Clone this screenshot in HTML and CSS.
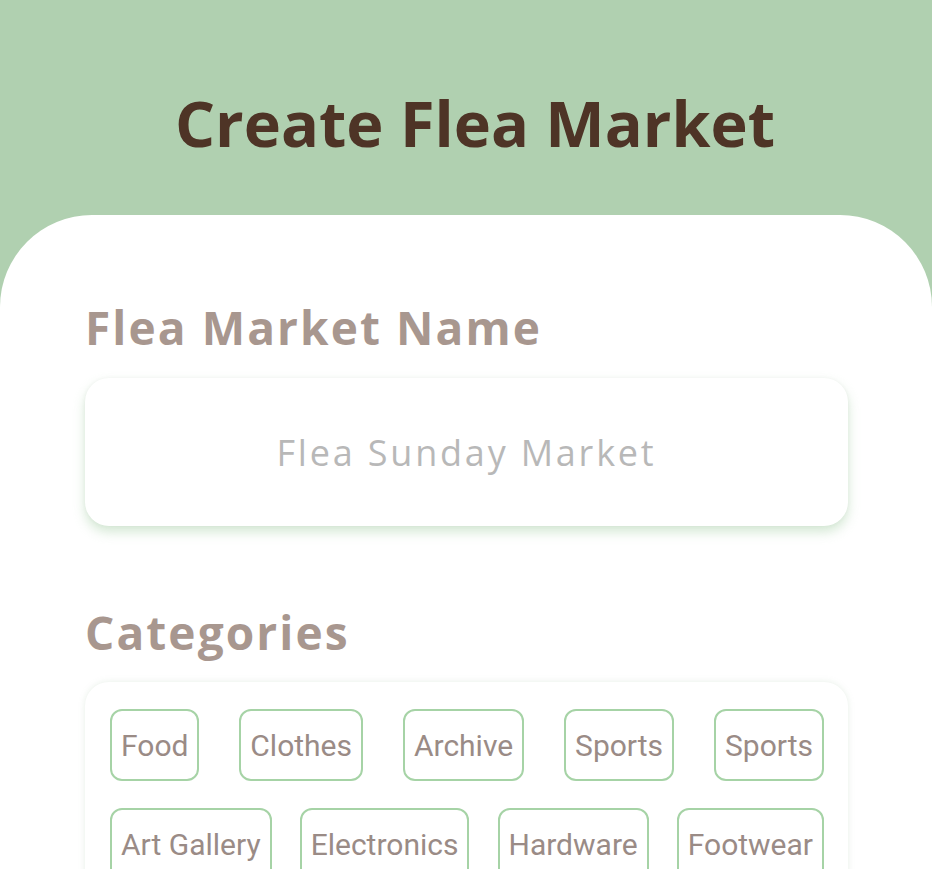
FILE: index.html
```html
<!DOCTYPE html>
<html>
<head>
<meta charset="utf-8">
<link rel="stylesheet" href="styles.css">
</head>
<body>
<header class="top">
  <h1 class="title">Create Flea Market</h1>
</header>
<main class="panel">
  <h2 class="label">Flea Market Name</h2>
  <div class="input">Flea Sunday Market</div>
  <h2 class="label label-cat">Categories</h2>
  <div class="card">
    <div class="chips">
      <span class="chip">Food</span>
      <span class="chip">Clothes</span>
      <span class="chip">Archive</span>
      <span class="chip">Sports</span>
      <span class="chip">Sports</span>
    </div>
    <div class="chips">
      <span class="chip">Art Gallery</span>
      <span class="chip">Electronics</span>
      <span class="chip">Hardware</span>
      <span class="chip">Footwear</span>
    </div>
  </div>
</main>
</body>
</html>
```
FILE: styles.css
```css
html, body {
  margin: 0;
  padding: 0;
}
body {
  background: #b0d0b0;
  font-family: "Open Sans", "Liberation Sans", sans-serif;
  height: 869px;
  overflow: hidden;
}
.top {
  height: 215px;
  box-sizing: border-box;
  padding-top: 91px;
  text-align: center;
}
.title {
  margin: 0;
  padding-left: 18px;
  font-size: 63px;
  line-height: 63px;
  font-weight: 700;
  color: #4e3426;
}
.panel {
  background: #fff;
  border-radius: 92px 92px 0 0;
  min-height: 700px;
  padding: 1px 84px 0 85px;
}
.label {
  margin: 88px 0 0;
  font-size: 46px;
  line-height: 46px;
  font-weight: 700;
  letter-spacing: 2.1px;
  color: #a8978f;
}
.label-cat {
  margin-top: 83px;
}
.input {
  margin-top: 28px;
  height: 148px;
  border-radius: 24px;
  background: #fff;
  box-shadow: 0 6px 12px rgba(160, 205, 160, 0.45), 0 0 4px rgba(0,0,0,0.04);
  display: flex;
  align-items: center;
  justify-content: center;
  font-size: 36px;
  letter-spacing: 2.8px;
  color: #b8b8b8;
}
.card {
  margin-top: 27px;
  border-radius: 24px;
  background: #fff;
  box-shadow: 0 0 6px rgba(160, 190, 160, 0.25);
  padding: 27px 24px 30px 25px;
  display: flex;
  flex-direction: column;
  gap: 27px;
}
.chips {
  display: flex;
  justify-content: space-between;
}
.chip {
  font-family: Roboto, "Liberation Sans", sans-serif;
  font-size: 30px;
  color: #9a8b86;
  border: 2px solid #a6d3a6;
  border-radius: 12px;
  height: 72px;
  box-sizing: border-box;
  padding: 0 9px;
  display: flex;
  align-items: center;
}
```
